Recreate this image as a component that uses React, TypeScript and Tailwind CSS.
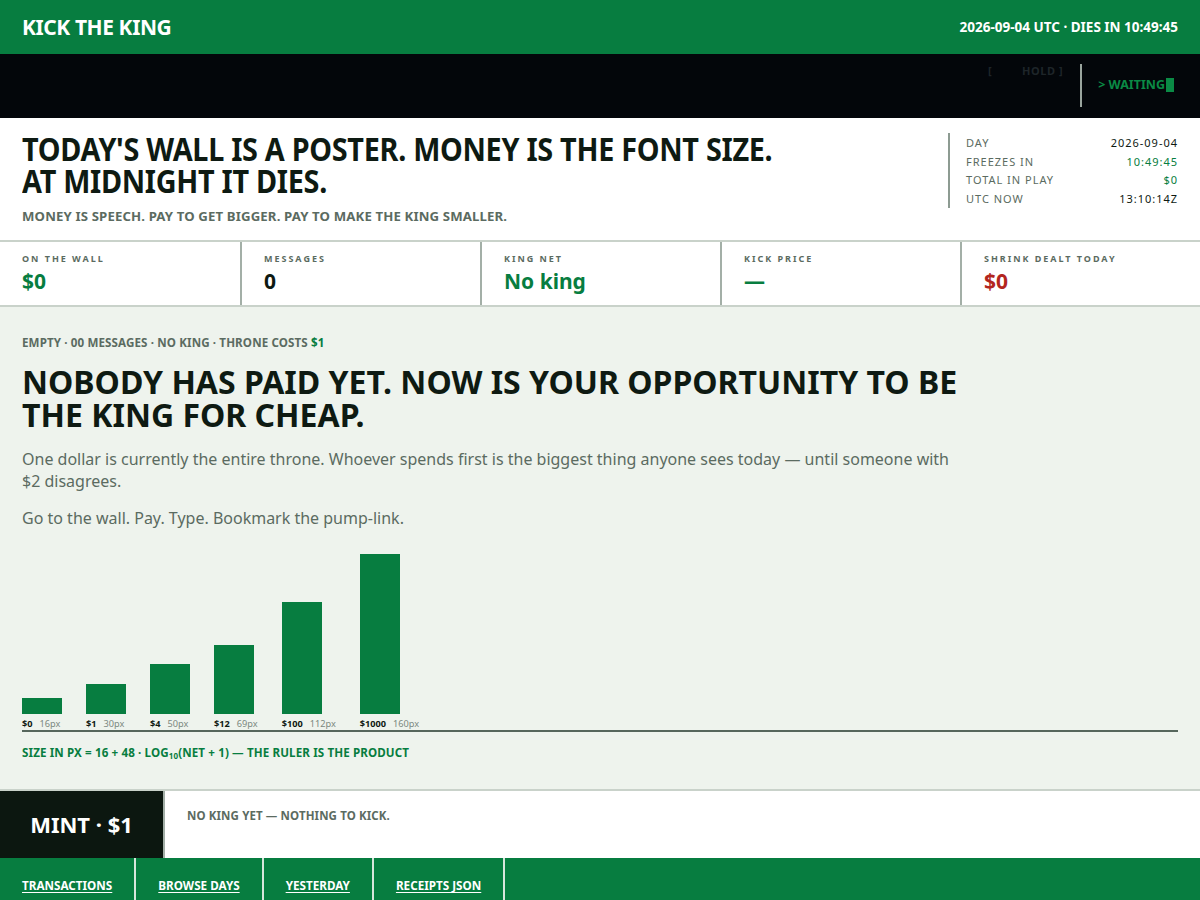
import React from 'react';

const bars = [
  { v: '$0', px: 16 },
  { v: '$1', px: 30 },
  { v: '$4', px: 50 },
  { v: '$12', px: 69 },
  { v: '$100', px: 112 },
  { v: '$1000', px: 160 },
];

const stats = [
  { label: 'ON THE WALL', value: '$0', color: 'text-[#077d40]' },
  { label: 'MESSAGES', value: '0', color: 'text-[#0e1a12]' },
  { label: 'KING NET', value: 'No king', color: 'text-[#077d40]' },
  { label: 'KICK PRICE', value: '—', color: 'text-[#077d40]' },
  { label: 'SHRINK DEALT TODAY', value: '$0', color: 'text-[#b3261e]' },
];

const meta = [
  { k: 'DAY', v: '2026-09-04', c: 'text-[#0e1a12]' },
  { k: 'FREEZES IN', v: '10:49:45', c: 'text-[#077d40]' },
  { k: 'TOTAL IN PLAY', v: '$0', c: 'text-[#077d40]' },
  { k: 'UTC NOW', v: '13:10:14Z', c: 'text-[#0e1a12]' },
];

const links = ['TRANSACTIONS', 'BROWSE DAYS', 'YESTERDAY', 'RECEIPTS JSON'];

export default function App() {
  return (
    <div className="w-[1200px] h-[900px] overflow-hidden bg-[#eef3ed] font-['Noto_Sans',sans-serif] text-[#0e1a12]">
      {/* top bar */}
      <header className="h-[54px] bg-[#077d40] text-white flex items-center justify-between px-[22px]">
        <div className="pt-[2px] text-[21px] font-bold tracking-[-0.02em]">KICK THE KING</div>
        <div className="text-[13.5px] font-bold">2026-09-04 UTC · DIES IN 10:49:45</div>
      </header>

      {/* terminal strip */}
      <div className="h-[64px] bg-[#03060a] flex justify-end pr-[26px]">
        <div className="flex items-start pt-[9px] text-[11px] font-bold tracking-[0.05em] text-[#1e2529] pr-[17px]">
          <span>[</span>
          <span className="w-[30px]" />
          <span>HOLD ]</span>
        </div>
        <div className="mt-[10px] h-[43px] w-[2px] bg-[#9aa59e]" />
        <div className="flex items-center pl-[16px] pb-[2px] text-[12.5px] font-bold text-[#0a8a45]">
          &gt; WAITING<span className="ml-[1px] inline-block w-[8px] h-[14px] bg-[#0a8a45]" />
        </div>
      </div>

      {/* hero */}
      <section className="bg-white h-[124px] border-b-2 border-[#c9d2ca] flex justify-between px-[22px] pt-[15px]">
        <div>
          <h1 className="origin-left scale-x-[0.9] whitespace-nowrap text-[32px] leading-[32px] font-bold tracking-[-0.01em] text-[#0e1a12]">
            <div>TODAY'S WALL IS A POSTER. MONEY IS THE FONT SIZE.</div>
            <div>AT MIDNIGHT IT DIES.</div>
          </h1>
          <p className="mt-[10px] text-[13.2px] font-bold text-[#5b6b61] tracking-[0.01em]">
            MONEY IS SPEECH. PAY TO GET BIGGER. PAY TO MAKE THE KING SMALLER.
          </p>
        </div>
        <div className="h-[75px] w-[230px] border-l-2 border-[#8d9b92] pl-[16px] pt-[1px] text-[11px] leading-[18.7px] tracking-[0.09em]">
          {meta.map((m) => (
            <div key={m.k} className="flex justify-between">
              <span className="text-[#5b6b61]">{m.k}</span>
              <span className={m.c}>{m.v}</span>
            </div>
          ))}
        </div>
      </section>

      {/* stats */}
      <section className="bg-white h-[65px] border-b-2 border-[#c9d2ca] grid grid-cols-5">
        {stats.map((s, i) => (
          <div key={s.label} className={`px-[22px] pt-[10px] ${i > 0 ? 'border-l-2 border-[#a3afa7]' : ''}`}>
            <div className="text-[9px] font-bold tracking-[0.22em] text-[#5b6b61]">{s.label}</div>
            <div className={`pt-[1px] text-[21px] leading-[28px] font-bold ${s.color}`}>{s.value}</div>
          </div>
        ))}
      </section>

      {/* main */}
      <main className="h-[482px] px-[22px] pt-[27px]">
        <div className="text-[11.6px] font-bold text-[#5b6b61] tracking-[0.01em]">
          EMPTY · 00 MESSAGES · NO KING · THRONE COSTS <span className="text-[#077d40]">$1</span>
        </div>
        <h2 className="mt-[14px] max-w-[960px] text-[32px] leading-[33px] font-bold text-[#0e1a12]">
          NOBODY HAS PAID YET. NOW IS YOUR OPPORTUNITY TO BE THE KING FOR CHEAP.
        </h2>
        <p className="mt-[17px] max-w-[940px] text-[16px] leading-[22px] text-[#5b6b61]">
          One dollar is currently the entire throne. Whoever spends first is the biggest thing anyone sees today — until someone with $2 disagrees.
        </p>
        <p className="mt-[15px] text-[16px] leading-[22px] text-[#5b6b61]">Go to the wall. Pay. Type. Bookmark the pump-link.</p>

        <div className="mt-[25px] border-b-2 border-[#56665c] flex items-end gap-[24px]">
          {bars.map((b) => (
            <div key={b.v} className="flex flex-col">
              <div className="w-[40px] bg-[#077d40]" style={{ height: b.px }} />
              <div className="mt-[4px] flex gap-[7px] text-[9.2px] leading-[12px] whitespace-nowrap">
                <span className="font-bold text-[#0e1a12]">{b.v}</span>
                <span className="text-[#7b887f]">{b.px}px</span>
              </div>
            </div>
          ))}
        </div>
        <div className="mt-[12px] text-[11.6px] font-bold text-[#077d40] tracking-[0.01em]">
          SIZE IN PX = 16 + 48 · LOG<sub className="text-[8px]">10</sub>(NET + 1) — THE RULER IS THE PRODUCT
        </div>
      </main>

      {/* action row */}
      <section className="h-[69px] border-t-2 border-[#c9d2ca] bg-white flex">
        <div className="w-[165px] bg-[#0c1710] border-r-2 border-[#a3afa7] flex items-center justify-center text-white text-[22px] font-bold">
          MINT · $1
        </div>
        <div className="pl-[22px] pt-[16px] text-[11.5px] font-bold text-[#5b6b61] tracking-[0.01em]">
          NO KING YET — NOTHING TO KICK.
        </div>
      </section>

      {/* footer nav */}
      <nav className="h-[60px] bg-[#077d40] flex">
        {links.map((l) => (
          <a
            key={l}
            href="#"
            className="px-[22px] pt-[19px] border-r-2 border-[#d7e6dc] text-white text-[11.7px] font-bold underline underline-offset-2"
          >
            {l}
          </a>
        ))}
      </nav>
    </div>
  );
}
